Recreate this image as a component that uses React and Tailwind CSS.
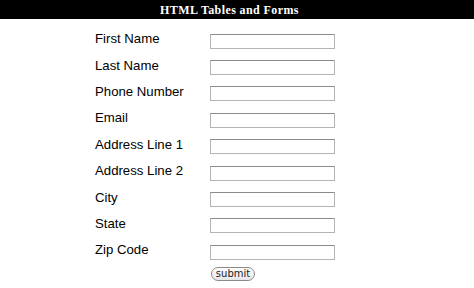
const FIELDS = [
  "First Name",
  "Last Name",
  "Phone Number",
  "Email",
  "Address Line 1",
  "Address Line 2",
  "City",
  "State",
  "Zip Code",
];

export default function App() {
  return (
    <div className="w-[474px] h-[288px] bg-white overflow-hidden">
      {/* Title bar */}
      <div className="h-[19px] bg-black flex items-center justify-center pr-[15px]">
        <span className="text-white text-[12px] font-bold font-['Liberation_Serif',serif] tracking-[0.4px]">
          HTML Tables and Forms
        </span>
      </div>

      <form className="pl-[95px] pt-[9px]" onSubmit={(e) => e.preventDefault()}>
        {FIELDS.map((label) => (
          <div key={label} className="flex items-center h-[26.4px]">
            <label className="w-[115px] text-[13.2px] leading-[16px] pb-[4px] text-black font-['Liberation_Sans',Arial,sans-serif]">
              {label}
            </label>
            <input
              type="text"
              className="w-[125px] h-[15px] bg-white border border-[#b4b4b4] border-t-[#8c8c8c] outline-none"
            />
          </div>
        ))}
        <div className="flex pl-[116px] pt-[1px]">
          <button
            type="submit"
            className="h-[14px] w-[44px] rounded-full border border-[#8a8a8a] bg-gradient-to-b from-white to-[#e6e6e6] text-[10px] leading-[12px] text-[#222] font-['DejaVu_Sans',sans-serif]"
          >
            submit
          </button>
        </div>
      </form>
    </div>
  );
}
